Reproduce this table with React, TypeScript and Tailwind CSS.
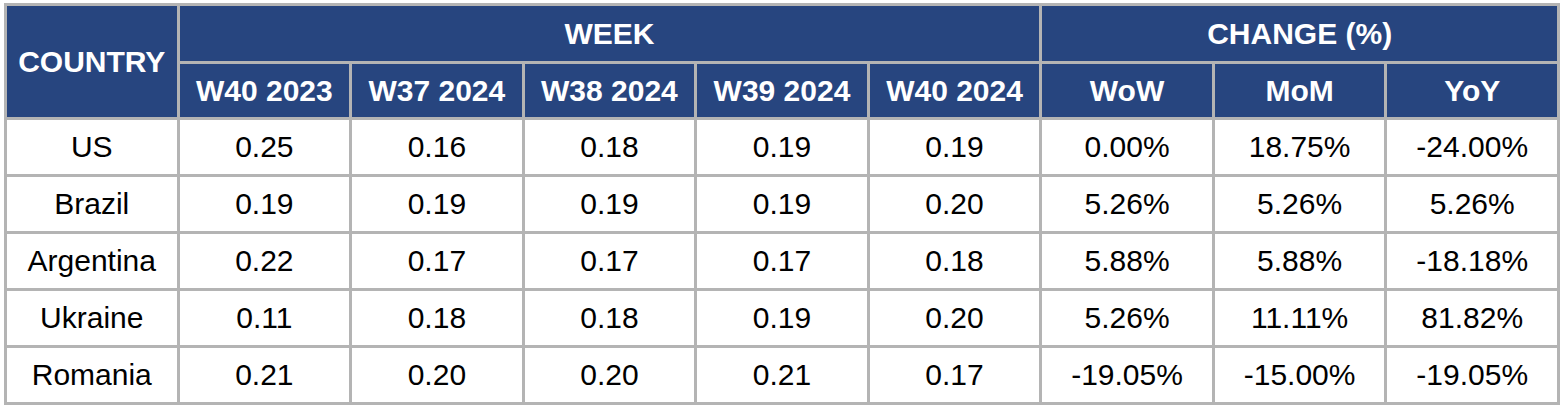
import React from 'react';

const weeks = ['W40 2023', 'W37 2024', 'W38 2024', 'W39 2024', 'W40 2024'];
const changes = ['WoW', 'MoM', 'YoY'];

const rows = [
  { country: 'US', values: ['0.25', '0.16', '0.18', '0.19', '0.19', '0.00%', '18.75%', '-24.00%'] },
  { country: 'Brazil', values: ['0.19', '0.19', '0.19', '0.19', '0.20', '5.26%', '5.26%', '5.26%'] },
  { country: 'Argentina', values: ['0.22', '0.17', '0.17', '0.17', '0.18', '5.88%', '5.88%', '-18.18%'] },
  { country: 'Ukraine', values: ['0.11', '0.18', '0.18', '0.19', '0.20', '5.26%', '11.11%', '81.82%'] },
  { country: 'Romania', values: ['0.21', '0.20', '0.20', '0.21', '0.17', '-19.05%', '-15.00%', '-19.05%'] },
];

const th = 'border-[3px] border-[#b4b4b4] bg-[#27457f] text-white font-bold text-center align-middle';
const td = 'border-[3px] border-[#b4b4b4] bg-white text-black text-center align-middle h-[57px]';

export default function App() {
  return (
    <div className="bg-white w-[1568px] h-[412px] pt-[3px] pl-[4px] font-['Liberation_Sans',Arial,sans-serif] text-[30px] leading-none">
      <table className="w-[1556px] table-fixed border-collapse">
        <thead>
          <tr className="h-[58px]">
            <th rowSpan={2} className={th}>COUNTRY</th>
            <th colSpan={5} className={th}>WEEK</th>
            <th colSpan={3} className={th}>CHANGE (%)</th>
          </tr>
          <tr className="h-[56px]">
            {weeks.map(w => (
              <th key={w} className={th}>{w}</th>
            ))}
            {changes.map(c => (
              <th key={c} className={th}>{c}</th>
            ))}
          </tr>
        </thead>
        <tbody>
          {rows.map(row => (
            <tr key={row.country}>
              <td className={td}>{row.country}</td>
              {row.values.map((v, i) => (
                <td key={i} className={td}>{v}</td>
              ))}
            </tr>
          ))}
        </tbody>
      </table>
    </div>
  );
}
